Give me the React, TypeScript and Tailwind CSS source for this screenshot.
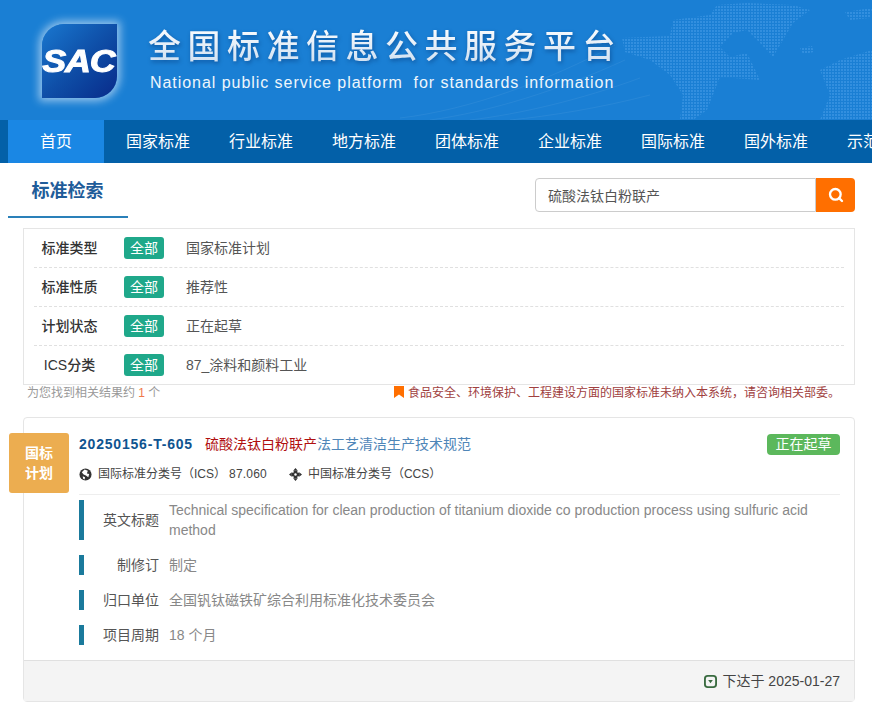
import { Search } from 'lucide-react';

const cjk = "font-['Liberation_Sans','Noto_Sans_CJK_SC',sans-serif]";

const navItems = ['国家标准', '行业标准', '地方标准', '团体标准', '企业标准', '国际标准', '国外标准', '示范试点'];

const filters = [
  { label: '标准类型', value: '国家标准计划' },
  { label: '标准性质', value: '推荐性' },
  { label: '计划状态', value: '正在起草' },
  { label: 'ICS分类', value: '87_涂料和颜料工业' },
];

const details = [
  { label: '制修订', value: '制定' },
  { label: '归口单位', value: '全国钒钛磁铁矿综合利用标准化技术委员会' },
  { label: '项目周期', value: '18 个月' },
];

function Logo() {
  return (
    <div className="w-[75px] h-[74px] shrink-0 pr-[3px] rounded-tl-[22px] rounded-br-[22px] bg-gradient-to-br from-[#1a78d0] via-[#0f4fa8] to-[#0a2a8a] shadow-[0_0_8px_3px_rgba(255,255,255,0.55)] flex items-center justify-center overflow-hidden">
      <span className="text-white text-[32px] leading-none font-bold italic tracking-[-1px] [-webkit-text-stroke:1px_white] font-['Liberation_Sans',sans-serif] scale-x-[1.12]">SAC</span>
    </div>
  );
}

// dotted world map + faint arcs behind the header
function HeaderMap() {
  return (
    <svg viewBox="0 0 472 120" className="absolute right-0 top-0 w-[472px] h-[120px]">
      <defs>
        <pattern id="dots" width="3" height="3" patternUnits="userSpaceOnUse">
          <rect width="2" height="2" fill="#4aa0ea" fillOpacity="0.5" />
        </pattern>
      </defs>
      <g fill="none" stroke="#fff" strokeOpacity="0.06">
        <path d="M0 118C70 110 150 80 215 45" />
        <path d="M30 120C90 112 160 90 225 60" />
        <path d="M70 120C120 114 180 100 240 78" />
        <path d="M110 120C150 116 200 108 250 95" />
      </g>
      <g fill="url(#dots)">
        <path d="M222 38 270 36 273 20 310 15 317 5 347 3 393 5 410 10 393 23 373 57 360 43 347 30 333 33 320 47 330 57 347 53 360 80 320 77 307 110 293 120 280 120 283 95 270 75 250 60 225 52Z" />
        <path d="M400 48 412 46 414 52 403 54Z" />
        <path d="M445 12 472 8 470 18 450 20Z" />
        <path d="M420 70 440 60 472 50 472 120 420 120 430 95Z" />
      </g>
    </svg>
  );
}

function Row({ label, children }: { label: string; children: React.ReactNode }) {
  return (
    <div className="flex items-center min-h-[20px]">
      <div className="w-[5px] self-stretch bg-[#1a7a9c] mr-[18px] shrink-0" />
      <div className="w-[57px] text-right text-[14px] leading-[20px] text-[#555] shrink-0">{label}</div>
      <div className="ml-[10px] text-[14px] leading-[20px] text-[#888]">{children}</div>
    </div>
  );
}

export default function App() {
  return (
    <div className={`w-[872px] h-[718px] overflow-hidden bg-white ${cjk}`}>
      {/* Header */}
      <div className="relative h-[120px] bg-[#1a7fd4] flex items-start pl-[42px] pt-[24px]">
        <HeaderMap />
        <Logo />
        <div className="relative ml-[31px] text-white">
          <div className="pt-[1px] text-[33px] leading-[44px] font-medium tracking-[6.5px] whitespace-nowrap bg-gradient-to-b from-white to-[#c9dcef] bg-clip-text text-transparent drop-shadow-[1px_2px_2px_rgba(0,40,100,0.45)]">全国标准信息公共服务平台</div>
          <div className="mt-[4px] pl-[2px] text-[16px] leading-[20px] tracking-[0.95px] whitespace-pre text-[#eef6fc]">National public service platform  for standards information</div>
        </div>
      </div>

      {/* Nav */}
      <div className="h-[43px] bg-[#0360a8] flex pl-[8px] overflow-hidden">
        <div className="w-[96px] shrink-0 bg-[#1a87e4] text-white text-[16px] flex items-center justify-center">首页</div>
        {navItems.map(item => (
          <div key={item} className="w-[103px] shrink-0 pl-[5px] text-white text-[16px] flex items-center justify-center whitespace-nowrap">{item}</div>
        ))}
      </div>

      {/* Search heading */}
      <div className="flex justify-between h-[65px] pl-[8px] pr-[17px]">
        <div className="w-[120px] h-[55px] border-b-2 border-[#2a80b9] pr-[1px] text-center text-[18px] leading-[56px] font-bold text-[#1f5c99]">标准检索</div>
        <div className="flex mt-[15px] h-[34px] w-[320px]">
          <div className="flex-1 border border-[#ccc] rounded-l-[4px] pl-[12px] text-[14px] leading-[34px] text-[#555]">硫酸法钛白粉联产</div>
          <div className="w-[39px] bg-[#ff6f00] rounded-r-[4px] flex items-center justify-center">
            <Search size={16} strokeWidth={3.5} className="text-white" />
          </div>
        </div>
      </div>

      {/* Filters */}
      <div className="mx-[23px] w-[832px] border border-[#e5e5e5] px-[10px]">
        {filters.map((f, i) => (
          <div key={f.label} className={`flex items-center ${i < 3 ? 'h-[39px] border-b border-dashed border-[#e0e0e0]' : 'h-[38px]'}`}>
            <div className="w-[71px] text-center text-[14px] font-medium text-[#333]">{f.label}</div>
            <div className="ml-[19px] w-[40px] h-[22px] rounded-[3px] bg-[#1fa88a] text-white text-[14px] leading-[22px] text-center">全部</div>
            <div className="ml-[22px] text-[14px] text-[#555]">{f.value}</div>
          </div>
        ))}
      </div>

      {/* Result summary */}
      <div className="flex justify-between pl-[27px] pr-[32px] h-[32px] text-[12px] leading-[16px]">
        <div className="text-[#999]">为您找到相关结果约 <span className="text-[#f0784a]">1</span> 个</div>
        <div className="flex items-start text-[#a04040]">
          <svg viewBox="0 0 10 12" className="w-[10px] h-[12px] mt-[1px] mr-[4px]">
            <path d="M0 0H10V12L5 8.5 0 12Z" fill="#ff6f00" />
          </svg>
          食品安全、环境保护、工程建设方面的国家标准未纳入本系统，请咨询相关部委。
        </div>
      </div>

      {/* Result card */}
      <div className="relative ml-[23px] w-[832px] h-[285px] border border-[#e5e5e5] rounded-[4px] flex flex-col">
        <div className="absolute left-[-15px] top-[15px] w-[60px] h-[60px] bg-[#ecad50] rounded-[3px] text-white text-[14px] leading-[20px] font-bold flex flex-col items-center justify-center">
          <span>国标</span>
          <span>计划</span>
        </div>
        <div className="flex-1 pl-[55px] pr-[14px] pt-[15px]">
          <div className="flex items-center h-[22px]">
            <span className="text-[14px] font-bold text-[#0f5490] tracking-[0.8px]">20250156-T-605</span>
            <span className="ml-[12px] text-[14px] text-[#b01010]">硫酸法钛白粉联产</span>
            <span className="text-[14px] text-[#4f86b8]">法工艺清洁生产技术规范</span>
            <span className="ml-auto w-[73px] h-[21px] rounded-[4px] bg-[#5cb85c] text-white text-[14px] leading-[21px] text-center">正在起草</span>
          </div>
          <div className="flex items-center h-[20px] mt-[9px] text-[12px] text-[#444]">
            <svg viewBox="0 0 14 14" className="w-[13px] h-[13px] mr-[6px]">
              <circle cx="7" cy="7" r="6.5" fill="#333" />
              <path d="M6 1.5 9.5 3 8.5 6 11 6.5 10 10 7.5 8 5 7 3 4.5Z" fill="#fff" />
              <path d="M4 9 6.5 10 6 12.5 4.5 11.5Z" fill="#fff" />
            </svg>
            <span>国际标准分类号（ICS）</span>
            <span className="ml-[3px] tracking-[0.2px]">87.060</span>
            <svg viewBox="0 0 14 14" className="w-[13px] h-[13px] ml-[22px] mr-[6px]">
              <path d="M7 0 9.5 3H4.5ZM7 14 4.5 11H9.5ZM0 7 3 4.5V9.5ZM14 7 11 9.5V4.5Z" fill="#333" />
              <rect x="5" y="3" width="4" height="8" fill="#333" />
              <rect x="3" y="5" width="8" height="4" fill="#333" />
              <circle cx="7" cy="7" r="1.3" fill="#fff" />
            </svg>
            <span>中国标准分类号（CCS）</span>
          </div>
          <div className="mt-[10px] pt-[5px] border-t border-[#eee] flex flex-col gap-[15px]">
            <Row label="英文标题">Technical specification for clean production of titanium dioxide co production process using sulfuric acid method</Row>
            {details.map(d => (
              <Row key={d.label} label={d.label}>{d.value}</Row>
            ))}
          </div>
        </div>
        <div className="h-[41px] bg-[#f4f4f4] border-t border-[#e0e0e0] flex items-center justify-end pr-[14px] text-[14px] text-[#444]">
          <svg viewBox="0 0 14 14" className="w-[13px] h-[13px] mr-[5px]">
            <rect x="1" y="1" width="12" height="12" rx="3" fill="none" stroke="#3a6b40" strokeWidth="2" />
            <path d="M4.5 5.5h5L7 9Z" fill="#3a6b40" />
          </svg>
          下达于 2025-01-27
        </div>
      </div>
    </div>
  );
}
